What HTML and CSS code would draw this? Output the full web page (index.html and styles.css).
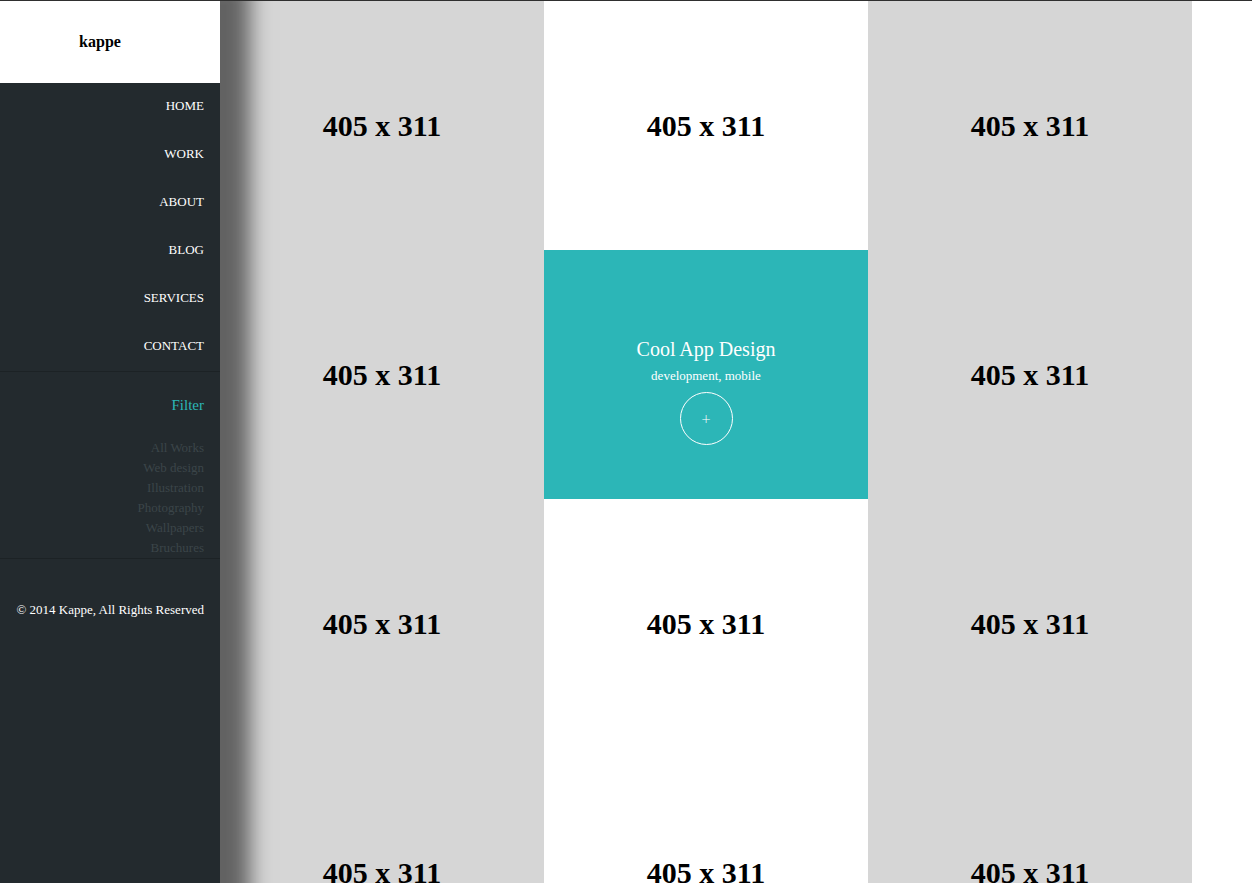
FILE: index.html
```html
<!DOCTYPE html>
<html lang="en">
<head>
<meta charset="utf-8">
<title>Kappe</title>
<link rel="stylesheet" href="styles.css">
</head>
<body>
<div class="page">
  <aside class="sidebar">
    <div class="logo">kappe</div>
    <nav class="menu">
      <a href="#">HOME</a>
      <a href="#">WORK</a>
      <a href="#">ABOUT</a>
      <a href="#">BLOG</a>
      <a href="#">SERVICES</a>
      <a href="#">CONTACT</a>
    </nav>
    <div class="filter">
      <div class="filter-title">Filter</div>
      <ul class="filter-list">
        <li>All Works</li>
        <li>Web design</li>
        <li>Illustration</li>
        <li>Photography</li>
        <li>Wallpapers</li>
        <li>Bruchures</li>
      </ul>
    </div>
    <div class="footer">© 2014 Kappe, All Rights Reserved</div>
  </aside>
  <main class="grid">
    <div class="tile gray">405 x 311</div>
    <div class="tile white">405 x 311</div>
    <div class="tile gray">405 x 311</div>
    <div class="tile gray">405 x 311</div>
    <div class="tile teal">
      <div class="card-title">Cool App Design</div>
      <div class="card-tags">development, mobile</div>
      <div class="card-btn">+</div>
    </div>
    <div class="tile gray">405 x 311</div>
    <div class="tile gray">405 x 311</div>
    <div class="tile white">405 x 311</div>
    <div class="tile gray">405 x 311</div>
    <div class="tile gray">405 x 311</div>
    <div class="tile white">405 x 311</div>
    <div class="tile gray">405 x 311</div>
  </main>
</div>
</body>
</html>
```
FILE: styles.css
```css
html {
  overflow: hidden;
}
body {
  margin: 0;
  border-top: 1px solid #2f2f2f;
  background: #fff;
  font-family: "Liberation Serif", "Times New Roman", serif;
}
.page {
  display: flex;
  align-items: stretch;
}
.sidebar {
  position: relative;
  z-index: 1;
  flex: 0 0 220px;
  width: 220px;
  background: #232a2e;
  box-shadow: 10px 0 20px 20px rgba(0, 0, 0, 0.54);
  display: flex;
  flex-direction: column;
}
.logo {
  height: 82px;
  background: #fff;
  color: #000;
  font-weight: bold;
  font-size: 16px;
  display: flex;
  align-items: center;
  justify-content: center;
  padding-right: 20px;
}
.menu {
  display: flex;
  flex-direction: column;
  border-bottom: 1px solid #1c2225;
}
.menu a {
  display: block;
  color: #fff;
  text-decoration: none;
  font-size: 13px;
  line-height: 18px;
  padding: 14px 16px 16px 0;
  text-align: right;
}
.filter {
  padding-top: 23px;
  border-bottom: 1px solid #1c2225;
  text-align: right;
  padding-right: 16px;
}
.filter-title {
  color: #2cb6b7;
  font-size: 15px;
  line-height: 20px;
}
.filter-list {
  list-style: none;
  margin: 23px 0 0;
  padding: 0;
}
.filter-list li {
  color: #3b4549;
  font-size: 13px;
  line-height: 20px;
}
.footer {
  color: #fff;
  font-size: 13px;
  line-height: 20px;
  text-align: right;
  padding: 41px 16px 0 0;
}
.grid {
  display: grid;
  grid-template-columns: repeat(3, 324px);
  grid-auto-rows: 249px;
}
.tile {
  display: flex;
  align-items: center;
  justify-content: center;
  font-weight: bold;
  font-size: 30px;
  color: #000;
}
.gray {
  background: #d6d6d6;
}
.white {
  background: #fff;
}
.teal {
  background: #2cb6b7;
  flex-direction: column;
  justify-content: flex-start;
  padding-top: 87px;
  box-sizing: border-box;
  font-weight: normal;
  color: #fff;
}
.card-title {
  font-size: 20px;
  line-height: 24px;
}
.card-tags {
  font-size: 13px;
  line-height: 16px;
  margin-top: 7px;
}
.card-btn {
  margin-top: 8px;
  width: 51px;
  height: 51px;
  border: 1px solid #fff;
  border-radius: 50%;
  display: flex;
  align-items: center;
  justify-content: center;
  font-family: "DejaVu Sans", sans-serif;
  font-size: 12px;
  font-weight: 300;
}
```
